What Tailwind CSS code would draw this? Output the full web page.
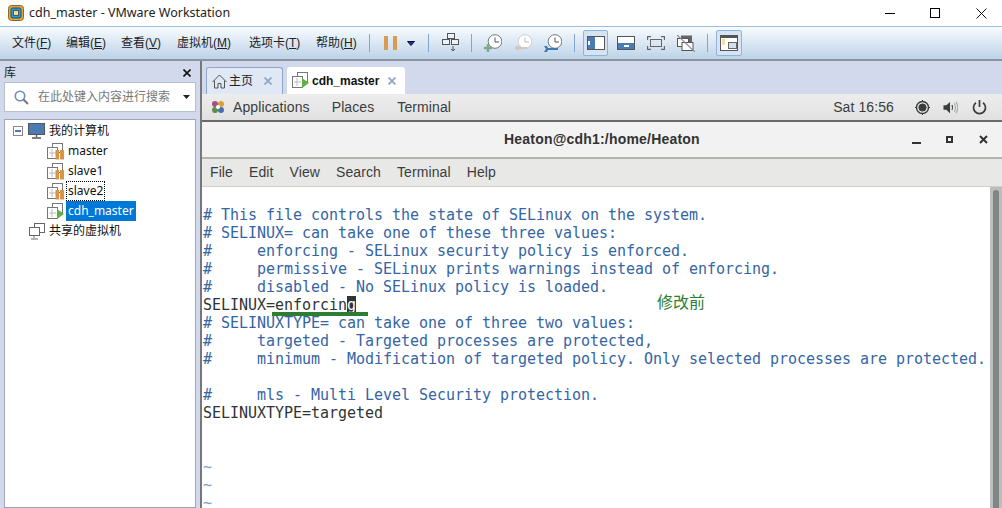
<!DOCTYPE html>
<html lang="zh">
<head>
<meta charset="UTF-8">
<title>cdh_master - VMware Workstation</title>
<script src="https://cdn.jsdelivr.net/npm/@tailwindcss/browser@4"></script>
</head>
<body class="w-[1002px] h-[508px] overflow-hidden bg-white font-['Liberation_Sans','Noto_Sans_CJK_SC',sans-serif] text-[12px] text-black">

<!-- window title -->
<div class="h-[26px] flex items-center bg-white">
  <svg class="ml-[8px] w-[16px] h-[16px]" viewBox="0 0 16 16"><rect x="0.5" y="0.5" width="15" height="15" rx="3" fill="#e8a33a" stroke="#8a6a2a"/><rect x="3" y="3" width="10" height="10" rx="1.5" fill="#2e9ad0" stroke="#14506e"/><rect x="5.5" y="5.5" width="5" height="5" fill="#e6e0a0" stroke="#555"/></svg>
  <span class="ml-[5px] text-[12.5px] text-[#222] font-['Noto_Sans']">cdh_master - VMware Workstation</span>
  <div class="ml-auto flex items-center">
    <div class="w-[10px] h-px bg-black mr-[35px]"></div>
    <div class="w-[10px] h-[10px] border border-black mr-[36px]"></div>
    <svg class="w-[11px] h-[11px] mr-[15px]" viewBox="0 0 11 11"><path d="M0.5 0.5L10.5 10.5M10.5 0.5L0.5 10.5" stroke="#111" fill="none"/></svg>
  </div>
</div>

<!-- menu + toolbar -->
<div class="h-[35px] flex items-center border-t border-[#9cc0dc] border-b-2 border-b-[#8a949e] bg-gradient-to-b from-[#f8fbfe] to-[#bdd3e8]">
  <div class="flex items-center pl-[12px] text-[12px] text-[#222]">
    <span class="w-[54px]">文件(<u>F</u>)</span><span class="w-[55px]">编辑(<u>E</u>)</span><span class="w-[56px]">查看(<u>V</u>)</span><span class="w-[72px]">虚拟机(<u>M</u>)</span><span class="w-[67px]">选项卡(<u>T</u>)</span><span class="w-[45px]">帮助(<u>H</u>)</span>
  </div>
  <div class="ml-[8px] w-px h-[18px] bg-[#7fa6cc]"></div>
  <div class="ml-[14px] flex gap-[5px]"><div class="w-[4px] h-[14px] bg-[#d99a52]"></div><div class="w-[4px] h-[14px] bg-[#d99a52]"></div></div>
  <svg class="ml-[10px] w-[8px] h-[5px]" viewBox="0 0 8 5"><path d="M0.5 0.5H7.5L4 4.5Z" fill="#1a2fd0" stroke="#111"/></svg>
  <div class="ml-[13px] w-px h-[18px] bg-[#7fa6cc]"></div>
  <svg class="ml-[13px] w-[17px] h-[20px]" viewBox="0 0 17 20" fill="#eef2f8" stroke="#555"><rect x="5.5" y="0.5" width="7" height="5"/><rect x="0.5" y="6.5" width="7" height="5"/><rect x="9.5" y="6.5" width="7" height="5"/><path d="M11 13V18M9 16L11 18L13 16" fill="none"/></svg>
  <div class="ml-[12px] w-px h-[18px] bg-[#7fa6cc]"></div>
  <svg class="ml-[12px] w-[18px] h-[18px]" viewBox="0 0 18 18"><circle cx="11" cy="7.5" r="6.8" fill="#fff" stroke="#777"/><path d="M11 3.5V8H15" fill="none" stroke="#555"/><path d="M4 10V18M0 14H8" stroke="#7fa58c" stroke-width="2.4"/></svg>
  <svg class="ml-[12px] w-[18px] h-[18px]" viewBox="0 0 18 18"><circle cx="11" cy="7.5" r="6.8" fill="#fff" stroke="#ccc"/><path d="M11 3.5V8H15" fill="none" stroke="#bbb"/><path d="M0 14L5 11V13H13V15H5V17Z" fill="#d0c8c0"/></svg>
  <svg class="ml-[12px] w-[18px] h-[18px]" viewBox="0 0 18 18"><circle cx="11" cy="7.5" r="6.8" fill="#fff" stroke="#777"/><path d="M11 3.5V8H15" fill="none" stroke="#555"/><path d="M0 12H3L4 14H14V16H4L3 18H0L2 15Z" fill="#3f78b0"/></svg>
  <div class="ml-[12px] w-px h-[18px] bg-[#7fa6cc]"></div>
  <div class="ml-[8px] w-[25px] h-[26px] flex items-center justify-center rounded-[2px] border border-[#8fb4dc] bg-[#d5e3f3]">
    <div class="w-[18px] h-[14px] flex border border-[#555] bg-white"><div class="w-[7px] flex items-center bg-[#4a7cb3]"><div class="w-[2px] h-[4px] bg-white"></div></div></div>
  </div>
  <div class="ml-[9px] w-[18px] h-[14px] flex flex-col justify-end border border-[#555] bg-white"><div class="h-[6px] flex justify-center items-center bg-[#4a7cb3]"><div class="w-[5px] h-[2px] bg-white"></div></div></div>
  <svg class="ml-[12px] w-[18px] h-[14px]" viewBox="0 0 18 14" fill="none" stroke="#666"><rect x="3.5" y="3.5" width="11" height="7"/><path d="M0.5 4V0.5H4M14 0.5H17.5V4M17.5 10V13.5H14M4 13.5H0.5V10" stroke-width="1.3"/></svg>
  <svg class="ml-[12px] w-[18px] h-[17px]" viewBox="0 0 18 17"><rect x="4" y="0.5" width="11" height="9" fill="#666"/><rect x="0.5" y="3.5" width="11" height="8" fill="#fff" stroke="#555"/><rect x="5" y="7.5" width="11" height="8" fill="#fff" stroke="#555"/><path d="M0 0L18 17" stroke="#889" stroke-width="1.2"/></svg>
  <div class="ml-[12px] w-px h-[18px] bg-[#7fa6cc]"></div>
  <div class="ml-[8px] w-[26px] h-[26px] flex items-center justify-center rounded-[2px] border border-[#8fb4dc] bg-[#d5e3f3]">
    <svg class="w-[18px] h-[16px]" viewBox="0 0 18 16"><rect x="0.5" y="0.5" width="17" height="15" fill="#fff" stroke="#555"/><rect x="0" y="0" width="18" height="3" fill="#555"/><path d="M2 5H5M2 7H5M2 9H5" stroke="#e8b84a"/><rect x="8.5" y="7.5" width="8" height="6" fill="#d5dfee" stroke="#666"/></svg>
  </div>
</div>

<div class="flex h-[447px]">
  <!-- library sidebar -->
  <div class="w-[196px] shrink-0 flex flex-col bg-[#d3d9ec]">
    <div class="h-[21px] flex items-center justify-between pl-[4px] pr-[5px] pt-[2px] text-[#222]">
      <span>库</span>
      <svg class="w-[8px] h-[8px]" viewBox="0 0 8 8"><path d="M0.5 0.5L7.5 7.5M7.5 0.5L0.5 7.5" stroke="#111" stroke-width="1.6"/></svg>
    </div>
    <div class="ml-[4px] h-[30px] flex items-center border border-[#b8bfcc] bg-white">
      <svg class="ml-[9px] w-[15px] h-[15px]" viewBox="0 0 15 15" fill="none" stroke="#6a8db5" stroke-width="1.6"><circle cx="6" cy="6" r="4.7"/><path d="M9.5 9.5L14 14" stroke="#777" stroke-width="2"/></svg>
      <span class="ml-[9px] text-[12px] text-[#777]">在此处键入内容进行搜索</span>
      <svg class="ml-[13px] w-[7px] h-[4px]" viewBox="0 0 7 4"><path d="M0 0H7L3.5 4Z" fill="#222"/></svg>
    </div>
    <div class="mt-[7px] ml-[4px] flex-1 border border-[#a0a6b4] bg-white font-['Noto_Sans','Noto_Sans_CJK_SC',sans-serif] text-[12px] text-[#111]">
      <div class="h-[20px] mt-[1px] flex items-center">
        <div class="ml-[8px] w-[10px] h-[10px] border border-[#888] flex items-center justify-center"><div class="w-[6px] h-[2px] bg-[#4a7cb3]"></div></div>
        <svg class="ml-[5px] w-[17px] h-[16px]" viewBox="0 0 17 16"><rect x="0.5" y="0.5" width="16" height="11" fill="#4a7cb3" stroke="#555"/><path d="M8.5 12V14M4 15H13" stroke="#555" stroke-width="1.4"/></svg>
        <span class="ml-[4px]">我的计算机</span>
      </div>
      <div class="h-[20px] flex items-center pl-[42px]">
        <svg class="w-[17px] h-[17px]" viewBox="0 0 17 17"><rect x="5.5" y="0.5" width="10" height="9" fill="#fff" stroke="#777"/><rect x="0.5" y="4.5" width="10" height="11" fill="#fff" stroke="#777"/><path d="M5 6V14M2 10H9" stroke="#bbb"/><rect x="8.5" y="7" width="3.5" height="9.5" fill="#d8944a"/><rect x="13" y="7" width="4" height="9.5" fill="#d8944a"/></svg>
        <span class="ml-[2px] px-[1px] leading-[18px] border border-transparent">master</span>
      </div>
      <div class="h-[20px] flex items-center pl-[42px]">
        <svg class="w-[17px] h-[17px]" viewBox="0 0 17 17"><rect x="5.5" y="0.5" width="10" height="9" fill="#fff" stroke="#777"/><rect x="0.5" y="4.5" width="10" height="11" fill="#fff" stroke="#777"/><path d="M5 6V14M2 10H9" stroke="#bbb"/><rect x="8.5" y="7" width="3.5" height="9.5" fill="#d8944a"/><rect x="13" y="7" width="4" height="9.5" fill="#d8944a"/></svg>
        <span class="ml-[2px] px-[1px] leading-[18px] border border-transparent">slave1</span>
      </div>
      <div class="h-[20px] flex items-center pl-[42px]">
        <svg class="w-[17px] h-[17px]" viewBox="0 0 17 17"><rect x="5.5" y="0.5" width="10" height="9" fill="#fff" stroke="#777"/><rect x="0.5" y="4.5" width="10" height="11" fill="#fff" stroke="#777"/><path d="M5 6V14M2 10H9" stroke="#bbb"/><rect x="8.5" y="7" width="3.5" height="9.5" fill="#d8944a"/><rect x="13" y="7" width="4" height="9.5" fill="#d8944a"/></svg>
        <span class="ml-[2px] px-[1px] leading-[18px] border border-dotted border-black">slave2</span>
      </div>
      <div class="h-[20px] flex items-center pl-[42px]">
        <svg class="w-[17px] h-[17px]" viewBox="0 0 17 17"><rect x="5.5" y="0.5" width="10" height="9" fill="#fff" stroke="#777"/><rect x="0.5" y="4.5" width="10" height="11" fill="#fff" stroke="#777"/><path d="M5 6V14M2 10H9" stroke="#bbb"/><path d="M10 6L17 11L10 16Z" fill="#62b043"/></svg>
        <span class="ml-[2px] px-[2px] leading-[20px] bg-[#0078d7] text-white">cdh_master</span>
      </div>
      <div class="h-[20px] flex items-center pl-[24px]">
        <svg class="w-[17px] h-[17px]" viewBox="0 0 17 17" fill="#fff" stroke="#666"><rect x="5.5" y="0.5" width="10" height="9"/><rect x="0.5" y="4.5" width="10" height="8"/><path d="M5 13V15M2 16H9"/></svg>
        <span class="ml-[3px]">共享的虚拟机</span>
      </div>
    </div>
  </div>

  <!-- sash -->
  <div class="w-[6px] shrink-0 bg-[#d3d9ec] border-r-2 border-[#777]"></div>

  <!-- right pane -->
  <div class="flex-1 min-w-0 flex flex-col">
    <div class="h-[33px] shrink-0 flex items-end gap-[4px] pl-[4px] bg-[#d3d9ec]">
      <div class="w-[77px] h-[27px] flex items-center rounded-t-[3px] border border-b-0 border-[#8fa8c8] bg-[#dfe8f4] text-[12px] text-[#222]">
        <svg class="ml-[5px] w-[15px] h-[15px]" viewBox="0 0 15 15" fill="none" stroke="#555"><path d="M0.5 8L7.5 1L14.5 8M2.5 6.5V14H6V9.5H9V14H12.5V6.5"/></svg>
        <span class="ml-[2px]">主页</span>
        <svg class="ml-[11px] w-[8px] h-[8px]" viewBox="0 0 8 8"><path d="M0.5 0.5L7.5 7.5M7.5 0.5L0.5 7.5" stroke="#8fa8c0" stroke-width="1.8"/></svg>
      </div>
      <div class="w-[118px] h-[27px] flex items-center rounded-t-[3px] bg-white text-[#111]">
        <svg class="ml-[5px] w-[17px] h-[17px]" viewBox="0 0 17 17"><rect x="5.5" y="0.5" width="10" height="9" fill="#fff" stroke="#777"/><rect x="0.5" y="4.5" width="10" height="11" fill="#fff" stroke="#777"/><path d="M5 6V14M2 10H9" stroke="#bbb"/><path d="M10 6L17 11L10 16Z" fill="#62b043"/></svg>
        <span class="ml-[3px] font-bold text-[12px]">cdh_master</span>
        <svg class="ml-[9px] w-[8px] h-[8px]" viewBox="0 0 8 8"><path d="M0.5 0.5L7.5 7.5M7.5 0.5L0.5 7.5" stroke="#8fa8c0" stroke-width="1.8"/></svg>
      </div>
    </div>

    <!-- guest desktop -->
    <div class="relative flex-1 flex flex-col min-h-0 font-['Liberation_Sans','Noto_Sans',sans-serif] text-[#3a3d3d]">
      <div class="h-[28px] shrink-0 flex items-center border-b-2 border-[#6a6a6a] bg-gradient-to-b from-[#ededed] to-[#e1e1e1] text-[14px] tracking-[0.1px]">
        <svg class="ml-[8px] w-[16px] h-[16px]" viewBox="0 0 16 16"><circle cx="5" cy="5" r="3" fill="#a84f80"/><circle cx="11" cy="5" r="3" fill="#d6a23a"/><circle cx="5" cy="11" r="3" fill="#5b8f4a"/><circle cx="11" cy="11" r="3" fill="#4a6fa8"/><circle cx="8" cy="8" r="2" fill="#fff"/></svg>
        <span class="ml-[7px]">Applications</span>
        <span class="ml-[22px]">Places</span>
        <span class="ml-[23px]">Terminal</span>
        <span class="ml-auto">Sat 16:56</span>
        <svg class="ml-[21px] w-[15px] h-[15px]" viewBox="0 0 15 15" fill="none" stroke="#3a3d3d"><circle cx="7.5" cy="7.5" r="6" stroke-width="1.4"/><circle cx="7.5" cy="7.5" r="3.6" fill="#3a3d3d"/><path d="M7.5 0V2M7.5 13V15M0 7.5H2M13 7.5H15"/></svg>
        <svg class="ml-[13px] w-[15px] h-[15px]" viewBox="0 0 16 15" fill="none"><path d="M0.5 5H3.5L7.5 1.5V13.5L3.5 10H0.5Z" fill="#3a3d3d"/><path d="M9.5 5C10.5 6.5 10.5 8.5 9.5 10" stroke="#3a3d3d" stroke-width="1.3"/><path d="M12 3C13.5 5.5 13.5 9.5 12 12M14 1.5C16 5 16 10 14 13.5" stroke="#aaa" stroke-width="1.2"/></svg>
        <svg class="ml-[14px] mr-[15px] w-[15px] h-[15px]" viewBox="0 0 15 15" fill="none" stroke="#3a3d3d" stroke-width="1.7"><path d="M4 2.8A6 6 0 1 0 11 2.8M7.5 0V7"/></svg>
      </div>
      <div class="h-[37px] shrink-0 flex items-center border-b-2 border-[#b5b5b0] bg-[#f2f2f2]">
        <span class="flex-1 pl-[302px] font-bold text-[14px] tracking-[0.2px] text-[#333]">Heaton@cdh1:/home/Heaton</span>
        <div class="w-[9px] h-[2px] mt-[7px] mr-[25px] bg-[#333]"></div>
        <div class="w-[7px] h-[7px] mr-[26px] border-2 border-[#333]"></div>
        <svg class="w-[9px] h-[9px] mr-[14px]" viewBox="0 0 9 9"><path d="M1 1L8 8M8 1L1 8" stroke="#333" stroke-width="2"/></svg>
      </div>
      <div class="h-[28px] shrink-0 flex items-center gap-[16px] pl-[8px] border-b border-[#cfcfcc] bg-[#e8e8e7] text-[14px] tracking-[0.1px]">
        <span>File</span><span>Edit</span><span>View</span><span>Search</span><span>Terminal</span><span>Help</span>
      </div>
      <div class="flex flex-1 min-h-0 bg-white">
        <div class="flex-1 min-w-0 overflow-hidden pl-[1px] pt-[19px] font-['DejaVu_Sans_Mono',monospace] text-[15px] leading-[18px] tracking-[-0.03px] text-[#3465a4] [&>div]:whitespace-pre [&>div]:h-[18px]">
          <div># This file controls the state of SELinux on the system.</div>
          <div># SELINUX= can take one of these three values:</div>
          <div>#     enforcing - SELinux security policy is enforced.</div>
          <div>#     permissive - SELinux prints warnings instead of enforcing.</div>
          <div>#     disabled - No SELinux policy is loaded.</div>
          <div class="text-[#2e3436]">SELINUX=enforcin<span class="bg-[#2e3436] text-white">g</span></div>
          <div># SELINUXTYPE= can take one of three two values:</div>
          <div>#     targeted - Targeted processes are protected,</div>
          <div>#     minimum - Modification of targeted policy. Only selected processes are protected.</div>
          <div></div>
          <div>#     mls - Multi Level Security protection.</div>
          <div class="text-[#2e3436]">SELINUXTYPE=targeted</div>
          <div></div>
          <div></div>
          <div class="text-[#729fcf]">~</div>
          <div class="text-[#729fcf]">~</div>
          <div class="text-[#729fcf]">~</div>
        </div>
        <div class="w-[12px] shrink-0 pl-[3px] pr-[3px] pt-[3px] bg-[#bdbdbd]">
          <div class="w-[6px] h-full rounded-t-full bg-[#7f8484]"></div>
        </div>
      </div>
      <!-- annotation drawn over the terminal -->
      <div class="absolute left-[70px] top-[218px] w-[96px] h-[4px] bg-[#2e7d32]"></div>
      <div class="absolute left-[455px] top-[195px] text-[16px] leading-[24px] text-[#2e7d32] font-['Noto_Sans_CJK_SC',sans-serif]">修改前</div>
    </div>
  </div>
</div>
</body>
</html>
